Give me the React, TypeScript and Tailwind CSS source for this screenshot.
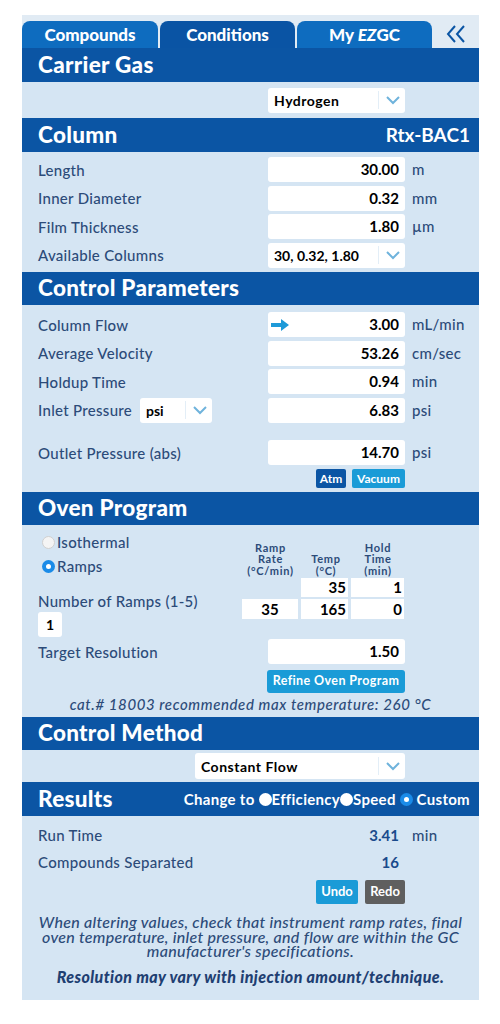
import React from "react";

const LBL = "text-[15px] font-medium tracking-[0.3px] text-[#2c4b79] leading-[18px]";
const INPUT = "h-[25px] bg-white rounded-[3px] flex items-center justify-end pr-[6px] text-[15px] font-bold text-black";
const UNIT = "text-[15px] font-medium tracking-[0.3px] text-[#2c4b79] pl-[7px]";

function Chevron() {
  return (
    <div className="flex items-center h-full">
      <div className="w-px h-[18px] bg-[#e3eef7]" />
      <svg width="24" height="14" viewBox="0 0 24 14" className="ml-[2px]">
        <path d="M6 4 L12 10 L18 4" stroke="#6fb3dc" strokeWidth="2" fill="none" />
      </svg>
    </div>
  );
}

function Header({ children, right, h = "h-[33px]" }: { children: React.ReactNode; right?: React.ReactNode; h?: string }) {
  return (
    <div className={`${h} bg-[#0b55a4] flex items-center justify-between pl-4 pr-[9px]`}>
      <div className="text-white font-black text-[22.5px] leading-none tracking-[0.3px]">{children}</div>
      {right}
    </div>
  );
}

function Row({ label, value, unit, left }: { label: React.ReactNode; value: React.ReactNode; unit?: string; left?: React.ReactNode }) {
  return (
    <div className="flex items-center h-[25px]">
      <div className={`w-[230px] ${LBL}`}>{label}</div>
      <div className={`w-[137px] ${INPUT}`}>
        {left}
        {value}
      </div>
      {unit && <div className={UNIT}>{unit}</div>}
    </div>
  );
}

export default function App() {
  return (
    <div className="w-[500px] min-h-[1024px] bg-white pt-[15px]" style={{ fontFamily: "Lato, 'Open Sans', sans-serif" }}>
      <div className="ml-[22px] w-[457px] bg-[#d5e5f3]">
        {/* Tabs */}
        <div className="flex items-end pt-[6px] bg-[#e1ebf4] h-[33px]">
          <div className="w-[136px] h-[27px] bg-[#0e6cbf] rounded-t-[8px] flex items-center justify-center text-white font-black text-[17px]">Compounds</div>
          <div className="ml-[2px] w-[135px] h-[27px] bg-[#0a54a4] rounded-t-[8px] flex items-center justify-center text-white font-black text-[17px]">Conditions</div>
          <div className="ml-[2px] w-[135px] h-[27px] bg-[#0e6cbf] rounded-t-[8px] flex items-center justify-center text-white font-black text-[17px]">
            My&nbsp;<span className="italic">EZ</span>GC
          </div>
          <div className="flex-1 h-[27px] flex items-center justify-center pb-[2px]">
            <svg width="22" height="20" viewBox="0 0 22 20">
              <path d="M10 2 L3 10 L10 18 M19 2 L12 10 L19 18" stroke="#0b55a4" strokeWidth="2" fill="none" strokeLinejoin="miter" />
            </svg>
          </div>
        </div>

        <Header h="h-[34px]">Carrier Gas</Header>
        <div className="h-[36px] flex items-center pl-[246px]">
          <div className="w-[137px] h-[25px] bg-white rounded-[3px] flex items-center justify-between pl-[6px]">
            <span className="text-[14px] font-bold text-black tracking-[0.5px]">Hydrogen</span>
            <Chevron />
          </div>
        </div>

        <Header h="h-[34px]" right={<div className="text-white font-bold text-[19px]">Rtx-BAC1</div>}>Column</Header>
        <div className="pl-4 pt-[5px] pb-[4.5px] flex flex-col gap-[3.5px]">
          <Row label="Length" value="30.00" unit="m" />
          <Row label="Inner Diameter" value="0.32" unit="mm" />
          <Row label="Film Thickness" value="1.80" unit="µm" />
          <div className="flex items-center h-[25px]">
            <div className={`w-[230px] ${LBL}`}>Available Columns</div>
            <div className="w-[137px] h-[25px] bg-white rounded-[3px] flex items-center justify-between pl-[6px]">
              <span className="text-[14px] font-bold text-black">30, 0.32, 1.80</span>
              <Chevron />
            </div>
          </div>
        </div>

        <Header>Control Parameters</Header>
        <div className="pl-4 pt-[7px] pb-[4px] flex flex-col gap-[3.5px]">
          <Row
            label="Column Flow"
            value="3.00"
            unit="mL/min"
            left={
              <svg width="20" height="14" viewBox="0 0 20 14" className="mr-auto ml-[2px]">
                <path d="M1 5 H11 V1 L19 7 L11 13 V9 H1 Z" fill="#1e9ad8" />
              </svg>
            }
          />
          <Row label="Average Velocity" value="53.26" unit="cm/sec" />
          <Row label="Holdup Time" value="0.94" unit="min" />
          <div className="flex items-center h-[25px]">
            <div className={`w-[102px] ${LBL}`}>Inlet Pressure</div>
            <div className="w-[72px] h-[25px] bg-white rounded-[3px] flex items-center justify-between pl-[6px]">
              <span className="text-[14px] font-bold text-black">psi</span>
              <Chevron />
            </div>
            <div className="w-[56px]" />
            <div className={`w-[137px] ${INPUT}`}>6.83</div>
            <div className={UNIT}>psi</div>
          </div>
          <div className="mt-[14px]">
            <Row label="Outlet Pressure (abs)" value="14.70" unit="psi" />
          </div>
          <div className="flex pl-[278px] gap-[6px] mt-[0.5px]">
            <div className="h-[19px] w-[30px] bg-[#0b55a4] rounded-[2px] text-white text-[12px] font-bold flex items-center justify-center">Atm</div>
            <div className="h-[19px] w-[53px] bg-[#1a9bd7] rounded-[2px] text-white text-[12px] font-bold flex items-center justify-center">Vacuum</div>
          </div>
        </div>

        <Header>Oven Program</Header>
        <div className="pl-4 pt-[8px] pb-[4px]">
          <div className="flex">
            <div className="w-[202px] flex flex-col">
              <div className="flex items-center gap-[2px] h-[18px] pl-[4px]">
                <span className="w-[13px] h-[13px] rounded-full bg-[#f4f4f4] border border-[#d0d0d0]" />
                <span className={LBL}>Isothermal</span>
              </div>
              <div className="flex items-center gap-[2px] h-[18px] mt-[6px] pl-[4px]">
                <span className="w-[13px] h-[13px] rounded-full bg-[#1a8be8] flex items-center justify-center">
                  <span className="w-[5px] h-[5px] rounded-full bg-white" />
                </span>
                <span className={LBL}>Ramps</span>
              </div>
              <div className={`${LBL} h-[18px] mt-[17px]`}>Number of Ramps (1-5)</div>
              <div className="w-[24px] h-[25px] bg-white rounded-[3px] mt-[2px] flex items-center justify-center text-[14px] font-bold">1</div>
            </div>
            <div className="flex flex-col pt-[10px]">
              <div className="flex items-end h-[33px] text-[11px] font-bold text-[#2c4b79] leading-[11.5px] text-center tracking-[0.7px]">
                <div className="w-[61px]">Ramp<br />Rate<br />(°C/min)</div>
                <div className="w-[50px]">Temp<br />(°C)</div>
                <div className="w-[54px]">Hold<br />Time<br />(min)</div>
              </div>
              <div className="flex mt-[2px] gap-[3px] pl-[61px]">
                <div className="w-[47px] h-[19px] bg-white flex items-center justify-end pr-[2px] text-[15px] font-bold">35</div>
                <div className="w-[53px] h-[19px] bg-white flex items-center justify-end pr-[2px] text-[15px] font-bold">1</div>
              </div>
              <div className="flex mt-[2px] gap-[3px] pl-[2px]">
                <div className="w-[56px] h-[20px] bg-white flex items-center justify-center text-[15px] font-bold">35</div>
                <div className="w-[47px] h-[20px] bg-white flex items-center justify-end pr-[2px] text-[15px] font-bold">165</div>
                <div className="w-[53px] h-[20px] bg-white flex items-center justify-end pr-[2px] text-[15px] font-bold">0</div>
              </div>
            </div>
          </div>
          <div className="mt-[2px]">
            <Row label="Target Resolution" value="1.50" />
          </div>
          <div className="pl-[229px] mt-[6px]">
            <div className="w-[138px] h-[23px] bg-[#1a9bd7] rounded-[3px] text-white text-[12.5px] font-bold flex items-center justify-center tracking-[0.4px]">Refine Oven Program</div>
          </div>
          <div className="text-center italic font-medium text-[15px] leading-[18px] h-[18px] text-[#2c4b79] pr-4 mt-[2px] tracking-[0.6px]">cat.# 18003 recommended max temperature: 260 °C</div>
        </div>

        <Header>Control Method</Header>
        <div className="h-[32px] flex items-center pl-[173px]">
          <div className="w-[210px] h-[26px] bg-white rounded-[3px] flex items-center justify-between pl-[6px]">
            <span className="text-[14px] font-bold text-black tracking-[0.5px]">Constant Flow</span>
            <Chevron />
          </div>
        </div>

        <Header
          h="h-[34px]"
          right={
            <div className="flex items-center text-white font-bold text-[15px] tracking-[0.3px]">
              <span>Change to&nbsp;</span>
              <span className="w-[13px] h-[13px] rounded-full bg-white inline-block" />
              <span>Efficiency</span>
              <span className="w-[13px] h-[13px] rounded-full bg-white inline-block" />
              <span>Speed&nbsp;</span>
              <span className="w-[13px] h-[13px] rounded-full bg-[#1a8be8] flex items-center justify-center">
                <span className="w-[5px] h-[5px] rounded-full bg-white" />
              </span>
              <span>&nbsp;Custom</span>
            </div>
          }
        >
          Results
        </Header>
        <div className="pl-4 pt-[6px] pb-[13px]">
          <div className="flex items-center h-[26px]">
            <div className={`w-[230px] ${LBL}`}>Run Time</div>
            <div className="w-[137px] text-right pr-[6px] text-[15px] font-bold text-[#1a4b8c]">3.41</div>
            <div className={UNIT}>min</div>
          </div>
          <div className="flex items-center h-[26px] mt-[1px]">
            <div className={`w-[230px] ${LBL}`}>Compounds Separated</div>
            <div className="w-[137px] text-right pr-[6px] text-[15px] font-bold text-[#1a4b8c]">16</div>
          </div>
          <div className="flex pl-[278px] gap-[7px] mt-[5px]">
            <div className="h-[24px] w-[42px] bg-[#1a9bd7] rounded-[2px] text-white text-[13px] font-bold flex items-center justify-center">Undo</div>
            <div className="h-[24px] w-[40px] bg-[#5f5f5f] rounded-[2px] text-white text-[13px] font-bold flex items-center justify-center">Redo</div>
          </div>
          <div className="pr-4 mt-[11px] text-center italic font-medium text-[16px] leading-[14.5px] text-[#2c4b79] tracking-[0.3px]">
            When altering values, check that instrument ramp rates, final oven temperature, inlet pressure, and flow are within the GC manufacturer's specifications.
          </div>
          <div className="pr-4 mt-[8.5px] h-[20px] leading-[20px] text-center italic font-black text-[16px] text-[#1f3f72] tracking-[0.4px]">
            Resolution may vary with injection amount/technique.
          </div>
        </div>
      </div>
    </div>
  );
}
